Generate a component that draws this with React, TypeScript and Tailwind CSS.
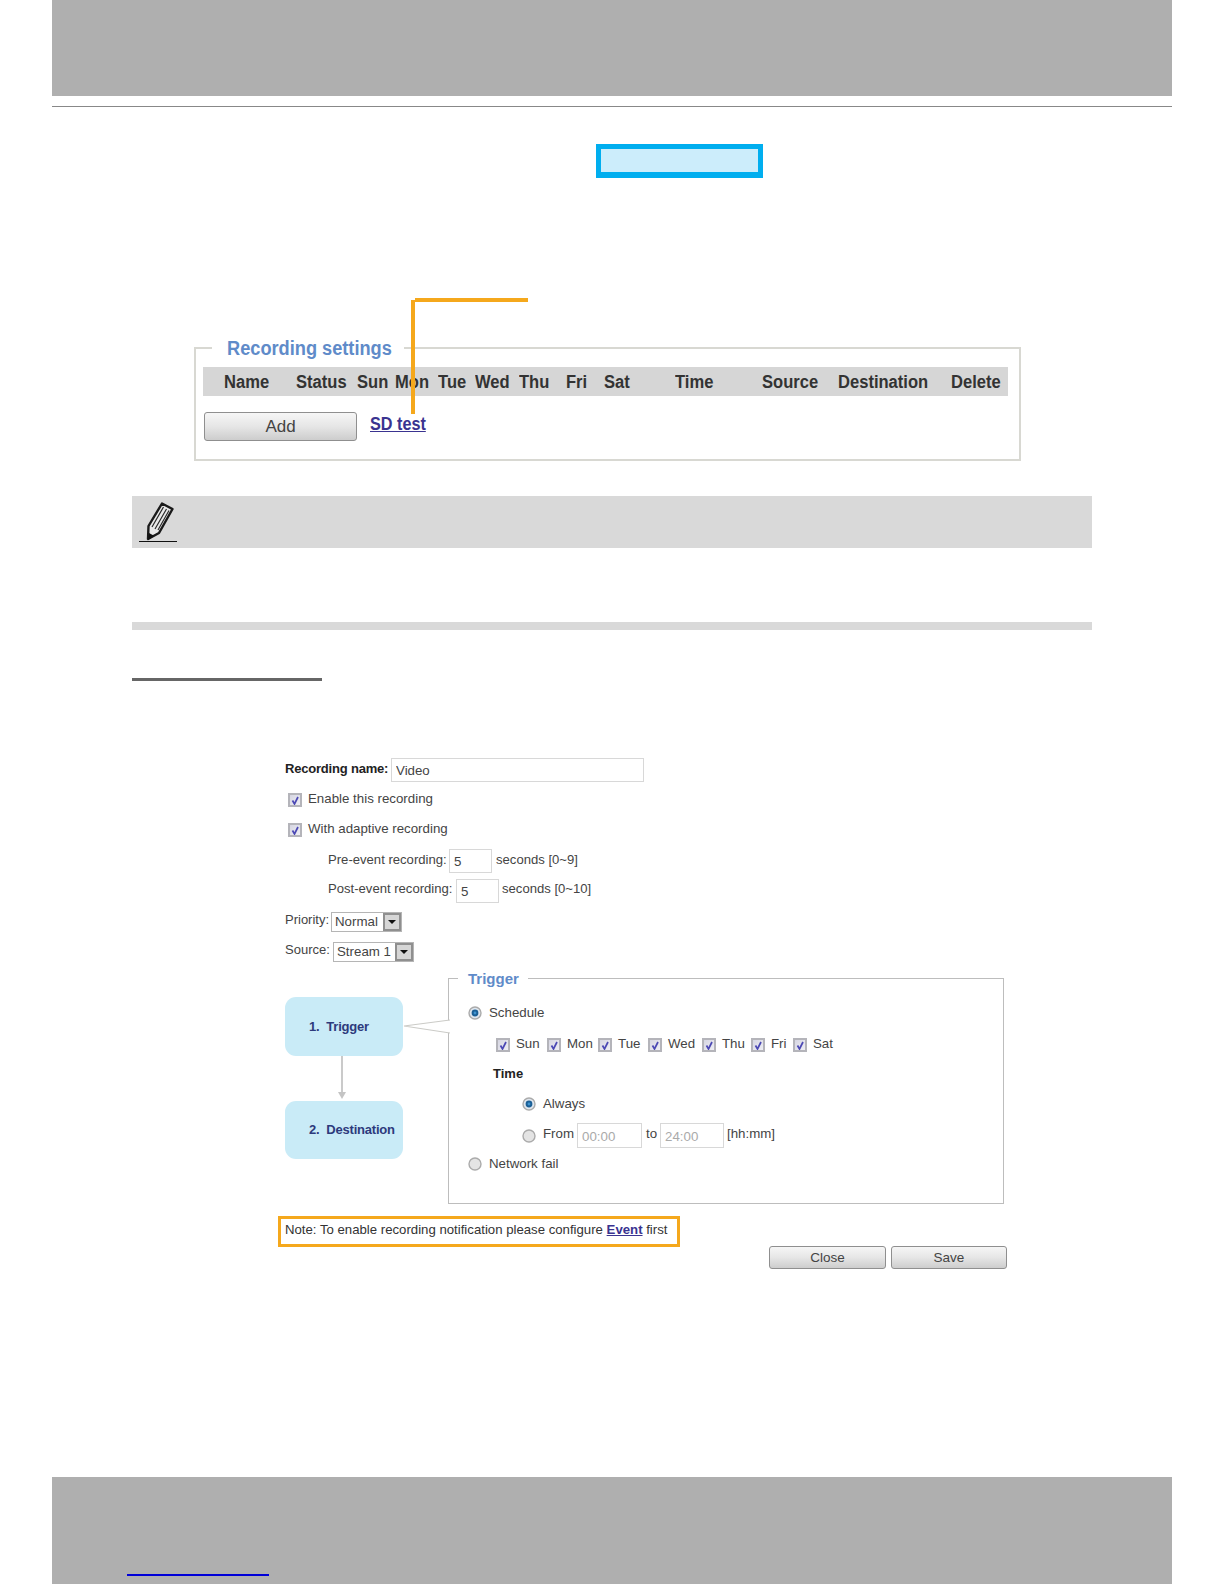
import type { ReactNode } from "react";

const columns = [
  { label: "Name", width: "w-[72px]" },
  { label: "Status", width: "w-[61px]" },
  { label: "Sun", width: "w-[38px]" },
  { label: "Mon", width: "w-[43px]" },
  { label: "Tue", width: "w-[37px]" },
  { label: "Wed", width: "w-[44px]" },
  { label: "Thu", width: "w-[47px]" },
  { label: "Fri", width: "w-[38px]" },
  { label: "Sat", width: "w-[71px]" },
  { label: "Time", width: "w-[87px]" },
  { label: "Source", width: "w-[76px]" },
  { label: "Destination", width: "w-[113px]" },
  { label: "Delete", width: "w-[56px]" },
];

const days = [
  { label: "Sun", width: "w-[51px]" },
  { label: "Mon", width: "w-[51px]" },
  { label: "Tue", width: "w-[50px]" },
  { label: "Wed", width: "w-[54px]" },
  { label: "Thu", width: "w-[49px]" },
  { label: "Fri", width: "w-[42px]" },
  { label: "Sat", width: "w-[40px]" },
];

function Check() {
  return (
    <span className="flex h-[14px] w-[14px] shrink-0 items-center justify-center border-2 border-[#b4b4ba] bg-linear-to-br from-[#d6d6e2] to-[#eeeef4]">
      <svg viewBox="0 0 10 10" className="h-[10px] w-[10px]">
        <path d="M2.5 5.5 L4.5 9 L8 2" fill="none" stroke="#4b48b4" strokeWidth="1.7" />
      </svg>
    </span>
  );
}

function Radio({ on }: { on?: boolean }) {
  return (
    <svg viewBox="0 0 14 14" className="h-[14px] w-[14px] shrink-0">
      <circle cx="7" cy="7" r="6" fill={on ? "#dfe6ee" : "#e4e4e4"} stroke="#ababab" strokeWidth="1.4" />
      {on && <circle cx="7" cy="7" r="3.4" fill="#1b5f96" />}
      {on && <circle cx="7" cy="7" r="1.4" fill="#3f93cf" />}
    </svg>
  );
}

function TextBox({ value, className }: { value: string; className: string }) {
  return (
    <input
      readOnly
      value={value}
      className={`border border-[#d8d8d8] bg-white pl-1 pt-[1px] text-[13.3px] text-[#444] outline-none ${className}`}
    />
  );
}

function Select({ value, className }: { value: string; className: string }) {
  return (
    <div className={`flex h-5 items-center border border-[#b5b5b5] bg-white pl-[3px] text-[13.3px] text-[#444] ${className}`}>
      <span className="flex-1 whitespace-nowrap">{value}</span>
      <span className="flex h-[18px] w-[18px] items-center justify-center border-2 border-[#8f8f8f] bg-[#d6d6d6]">
        <span className="h-0 w-0 border-x-[4px] border-t-[4px] border-x-transparent border-t-[#111]" />
      </span>
    </div>
  );
}

function Button({ children, className }: { children: ReactNode; className: string }) {
  return (
    <button className={`rounded-[3px] border border-[#8f8f8f] bg-linear-to-b from-[#f6f6f6] via-[#e6e6e6] to-[#cdcdcd] text-[#444] ${className}`}>
      {children}
    </button>
  );
}

function Bubble({ children, className }: { children: ReactNode; className: string }) {
  return (
    <div className={`flex w-[118px] items-center whitespace-nowrap rounded-[11px] bg-[#c9ebf7] pl-6 text-[13px] font-bold tracking-[-0.2px] text-[#2d3a7c] ${className}`}>
      {children}
    </div>
  );
}

export default function App() {
  return (
    <div className="relative flex h-[1584px] w-[1224px] flex-col overflow-hidden bg-white font-['Liberation_Sans',sans-serif] text-[13.3px] text-[#444]">
      <div className="mx-[52px] h-[96px] shrink-0 bg-[#afafaf]" />
      <div className="mx-[52px] mt-[10px] h-px shrink-0 bg-[#888]" />
      <div className="ml-[596px] mt-[37px] h-[34px] w-[167px] shrink-0 border-[5px] border-b-[6px] border-[#00aeef] bg-[#ccedfb]" />

      {/* recording settings panel */}
      <div className="relative ml-[194px] mt-[169px] h-[114px] w-[827px] shrink-0 border-2 border-[#d8d8d2] pl-[7px] pt-[18px]">
        <div className="absolute -top-[13px] left-4 h-6 w-[192px] bg-white pl-[15px] text-[20px] font-bold leading-6 text-[#5f8bc9]">
          <span className="block origin-left scale-x-[0.91] whitespace-nowrap">Recording settings</span>
        </div>
        <div className="flex h-[29px] w-[805px] items-center bg-[#d6d6d6] pl-[21px] pt-[1px] text-[18px] font-bold text-[#333]">
          {columns.map((c) => (
            <span key={c.label} className={`shrink-0 ${c.width}`}>
              <span className="block origin-left scale-x-[0.92] whitespace-nowrap">{c.label}</span>
            </span>
          ))}
        </div>
        <div className="mt-4 flex items-start">
          <Button className="ml-[1px] h-[29px] w-[153px] text-[17px]">Add</Button>
          <a className="ml-[13px] -mt-[1px] w-[62px] origin-left scale-x-90 whitespace-nowrap text-[18px] font-bold text-[#3a3390] underline">
            SD test
          </a>
        </div>
      </div>

      <div className="ml-[132px] mt-[35px] flex h-[52px] w-[960px] shrink-0 items-start bg-[#d9d9d9] pl-[7px] pt-[6px]">
        <svg viewBox="0 0 38 40" className="h-10 w-[38px]">
          <path d="M23 1.5 L33.5 7 L20 31 L9 37 L9.5 24 Z" fill="#e8e8e8" stroke="#1a1a1a" strokeWidth="2.4" strokeLinejoin="round" />
          <path d="M13 25 L24.5 5 M16 27 L27.5 7 M19 28 L30 8.5" fill="none" stroke="#2a2a2a" strokeWidth="1.2" />
          <path d="M10 31 L9 38 L15.5 34 Z" fill="#111" />
          <path d="M0 39.5 H38" stroke="#111" strokeWidth="1" />
        </svg>
      </div>

      <div className="ml-[132px] mt-[74px] h-2 w-[960px] shrink-0 bg-[#d9d9d9]" />
      <div className="ml-[132px] mt-[48px] h-[3px] w-[190px] shrink-0 bg-[#666]" />

      {/* recording form */}
      <div className="ml-[285px] mt-[77px] flex w-[722px] shrink-0 flex-col">
        <div className="flex h-6 items-center">
          <span className="w-[106px] -mt-[3px] whitespace-nowrap text-[13px] font-bold tracking-[-0.2px] text-[#222]">Recording name:</span>
          <TextBox value="Video" className="h-6 w-[253px]" />
        </div>
        <div className="ml-[3px] mt-[6px] flex h-6 items-center gap-[6px]">
          <Check />
          <span className="-mt-[3px]">Enable this recording</span>
        </div>
        <div className="ml-[3px] mt-[6px] flex h-6 items-center gap-[6px]">
          <Check />
          <span className="-mt-[3px]">With adaptive recording</span>
        </div>
        <div className="ml-[43px] mt-[7px] flex h-6 items-center text-[13.1px]">
          <span className="w-[121px] -mt-[3px] whitespace-nowrap">Pre-event recording:</span>
          <TextBox value="5" className="h-6 w-[43px]" />
          <span className="ml-1 -mt-[3px]">seconds [0~9]</span>
        </div>
        <div className="ml-[43px] mt-[6px] flex h-6 items-center text-[13.1px]">
          <span className="w-[128px] -mt-[4px] whitespace-nowrap">Post-event recording:</span>
          <TextBox value="5" className="h-6 w-[43px]" />
          <span className="ml-[3px] -mt-[4px]">seconds [0~10]</span>
        </div>
        <div className="mt-[9px] flex h-5 items-center">
          <span className="w-[46px] -mt-[4px] text-[13px]">Priority:</span>
          <Select value="Normal" className="w-[71px]" />
        </div>
        <div className="mt-[10px] flex h-5 items-center">
          <span className="w-[48px] -mt-[4px] text-[13px]">Source:</span>
          <Select value="Stream 1" className="w-[81px]" />
        </div>

        <div className="mt-4 flex">
          <div className="flex w-[163px] shrink-0 flex-col pt-[19px]">
            <Bubble className="h-[59px]">1.&nbsp;&nbsp;Trigger</Bubble>
            <div className="ml-[53px] flex h-[45px] w-2 flex-col items-center">
              <div className="h-[36px] w-[2px] shrink-0 bg-[#cacaca]" />
              <div className="h-0 w-0 shrink-0 border-x-[4px] border-t-[7px] border-x-transparent border-t-[#c4c4c4]" />
            </div>
            <Bubble className="h-[58px]">2.&nbsp;&nbsp;Destination</Bubble>
          </div>

          <div className="relative h-[226px] w-[556px] shrink-0 border border-[#bdbdbd] pl-[19px] pt-[24px]">
            <div className="absolute -top-[10px] left-[9px] h-5 w-[70px] bg-white pl-[10px] text-[15px] font-bold leading-5 text-[#5f8bc9]">
              Trigger
            </div>
            <div className="flex h-5 items-center gap-[7px]">
              <Radio on />
              <span>Schedule</span>
            </div>
            <div className="ml-[28px] mt-3 flex h-5 items-center">
              {days.map((d) => (
                <span key={d.label} className={`flex shrink-0 items-center gap-[6px] ${d.width}`}>
                  <Check />
                  <span className="-mt-[3px]">{d.label}</span>
                </span>
              ))}
            </div>
            <div className="ml-[25px] mt-[9px] flex h-5 items-center font-bold text-[13px] text-[#222]">Time</div>
            <div className="ml-[54px] mt-[10px] flex h-5 items-center gap-[7px]">
              <Radio on />
              <span>Always</span>
            </div>
            <div className="ml-[54px] mt-[9px] flex h-[25px] items-center">
              <Radio />
              <span className="ml-[7px] w-[34px] -mt-[3px]">From</span>
              <TextBox value="00:00" className="h-[25px] w-[65px] text-[#aaa]" />
              <span className="ml-1 w-[14px] -mt-[3px]">to</span>
              <TextBox value="24:00" className="h-[25px] w-[64px] text-[#aaa]" />
              <span className="ml-[3px] -mt-[3px]">[hh:mm]</span>
            </div>
            <div className="mt-[6px] flex h-5 items-center gap-[7px]">
              <Radio />
              <span>Network fail</span>
            </div>
          </div>
        </div>

        <div className="-ml-[7px] mt-3 flex h-[31px] w-[402px] items-center border-[3px] border-[#f5a81c] pl-1 pb-[3px]">
          <span className="whitespace-nowrap text-[13.2px] text-[#333]">
            Note: To enable recording notification please configure{" "}
            <a className="font-bold text-[#3a3390] underline">Event</a> first
          </span>
        </div>
        <div className="-mt-px flex justify-end gap-[5px]">
          <Button className="h-[23px] w-[117px] pt-[1px] text-[13.5px]">Close</Button>
          <Button className="h-[23px] w-[116px] pt-[1px] text-[13.5px]">Save</Button>
        </div>
      </div>

      <div className="mx-[52px] mt-auto h-[107px] shrink-0 bg-[#afafaf] pl-[75px] pt-[97px]">
        <div className="h-[2px] w-[142px] bg-[#0000d8]" />
      </div>

      {/* orange leader line over the settings table */}
      <div className="absolute left-[415px] top-[298px] h-1 w-[113px] bg-[#f5a81c]" />
      <div className="absolute left-[411px] top-[300px] h-[114px] w-1 bg-[#f5a81c]" />

      {/* callout from the Trigger bubble to the panel */}
      <svg viewBox="0 0 47 16" className="absolute left-[403px] top-[1019px] h-4 w-[47px]">
        <path d="M47 1 L1 7 L47 14" fill="#fff" stroke="#cbcbc7" strokeWidth="1.2" />
      </svg>
    </div>
  );
}
